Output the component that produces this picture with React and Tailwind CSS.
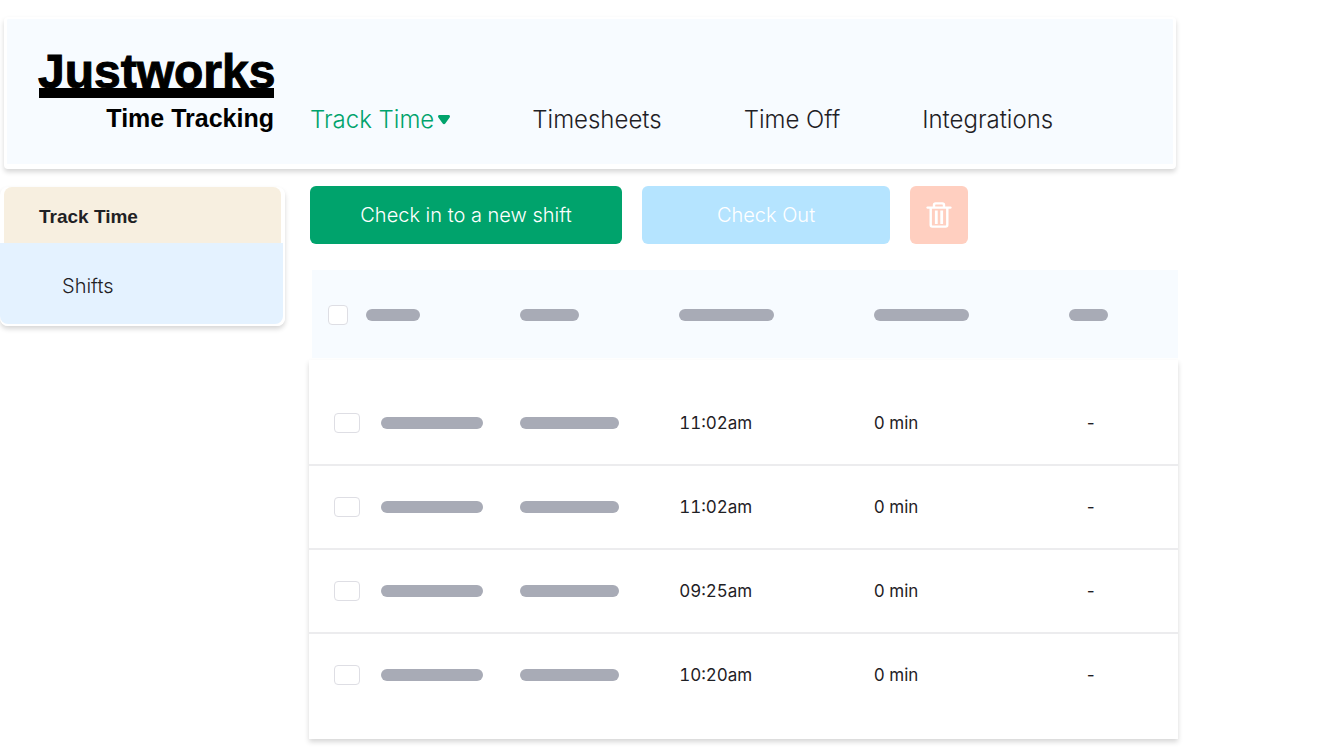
const shifts = [
  { id: 1, start: "11:02am", duration: "0 min", note: "-" },
  { id: 2, start: "11:02am", duration: "0 min", note: "-" },
  { id: 3, start: "09:25am", duration: "0 min", note: "-" },
  { id: 4, start: "10:20am", duration: "0 min", note: "-" },
];

function Logo() {
  return (
    <a href="#" className="flex w-[238px] shrink-0 flex-col font-['Liberation_Sans',sans-serif] font-bold text-black">
      <span className="h-9 text-5xl leading-10 whitespace-nowrap [-webkit-text-stroke:1px_black]">
        Justworks
      </span>
      <span className="mr-0.5 ml-px h-2.5 bg-black" />
      <span className="mt-1 mr-0.5 text-right text-[25px] leading-8 whitespace-nowrap">
        Time Tracking
      </span>
    </a>
  );
}

function Caret() {
  return (
    <svg viewBox="0 0 12 10" className="h-2.5 w-3" aria-hidden="true">
      <path
        d="M1.5 0h9c1.3 0 1.9 1.4 1.1 2.4L7.3 8.6c-.7.9-1.9.9-2.6 0L.4 2.4C-.4 1.4.2 0 1.5 0z"
        fill="currentColor"
      />
    </svg>
  );
}

function TrashIcon() {
  return (
    <svg viewBox="0 0 26 28" className="h-7 w-[26px]" fill="none" stroke="currentColor" strokeWidth="2.4" aria-hidden="true">
      <path d="M1.6 6.6h22.800" strokeLinecap="round" />
      <path d="M8 6V4c0-1 .6-1.600 1.600-1.600h6.800c1 0 1.600.6 1.600 1.600V6" />
      <path d="M4.700 7v17c0 1 .6 1.600 1.600 1.600h13.400c1 0 1.600-.6 1.600-1.600V7" />
      <path d="M10.300 9.500v13.500M15.700 9.500v13.500" strokeWidth="2.800" />
    </svg>
  );
}

function Bar({ className }) {
  return <span className={`block h-3 rounded-full bg-[#a8abb6] ${className}`} />;
}

function Checkbox({ label, className }) {
  return (
    <input
      type="checkbox"
      aria-label={label}
      className={`block h-5 appearance-none rounded border border-[#dedee4] bg-white checked:bg-[#00a36c] ${className}`}
    />
  );
}

export default function App() {
  return (
    <div className="w-[87.9%] bg-white pt-[17px] pb-4 font-['Inter','Liberation_Sans',sans-serif] text-[#1f2125]">
      <header className="mr-0.5 ml-1 flex items-start rounded border-x-[3px] border-t-2 border-b-[5px] border-white bg-[#f7fbff] pt-[33px] pb-7 pl-[31px] shadow-[0_3px_5px_rgba(0,0,0,0.16)]">
        <Logo />
        <nav className="mt-[52px] ml-[34px] flex items-center gap-[82px] text-2xl leading-8 font-light whitespace-nowrap">
          <button type="button" className="flex items-center gap-1 text-[#00a36c]">
            Track Time
            <Caret />
          </button>
          <a href="#timesheets">Timesheets</a>
          <a href="#time-off">Time Off</a>
          <a href="#integrations">Integrations</a>
        </nav>
      </header>

      <div className="mt-[17px] flex items-start gap-6">
        <aside className="mt-px w-[285px] shrink-0 rounded-lg border-r-2 border-b-2 border-white shadow-[0_3px_5px_rgba(0,0,0,0.16)]">
          <h2 className="mr-0.5 ml-1 rounded-t-lg bg-[#f7efe0] pt-[18px] pb-3.5 pl-[35px] font-['Liberation_Sans',sans-serif] text-[19px] leading-6 font-bold">
            Track Time
          </h2>
          <a href="#shifts" className="block rounded-b-lg bg-[#e4f2ff] pt-[29px] pb-6 pl-[62px] text-xl leading-7 font-light">
            Shifts
          </a>
        </aside>

        <main className="min-w-0 flex-1">
          <div className="flex gap-5 pl-px text-xl font-light text-white">
            <button type="button" className="h-[58px] w-[312px] rounded-md bg-[#00a36c]">
              Check in to a new shift
            </button>
            <button type="button" className="h-[58px] w-[248px] rounded-md bg-[#b5e4ff]">
              Check Out
            </button>
            <button
              type="button"
              aria-label="Delete shift"
              className="flex size-[58px] items-center justify-center rounded-md bg-[#ffcfc0]"
            >
              <TrashIcon />
            </button>
          </div>

          <table className="mt-[26px] w-full table-fixed border-separate border-spacing-0 text-left">
            <colgroup>
              <col className="w-[6.6%]" />
              <col className="w-[17.7%]" />
              <col className="w-[18.3%]" />
              <col className="w-[22.4%]" />
              <col className="w-[22.5%]" />
              <col />
            </colgroup>
            <thead>
              <tr className="h-[90px] *:border-b-2 *:border-white *:bg-[#f7fbff] *:p-0 *:pt-0.5 *:align-middle">
                <th className="border-l-[3px]">
                  <Checkbox label="Select all shifts" className="ml-4 w-5" />
                </th>
                <th><Bar className="w-[54px]" /></th>
                <th><Bar className="w-[59px]" /></th>
                <th><Bar className="w-[95px]" /></th>
                <th><Bar className="w-[95px]" /></th>
                <th><Bar className="w-[39px]" /></th>
              </tr>
            </thead>
            <tbody className="text-[17px] leading-6 tabular-nums shadow-[0_3px_5px_rgba(0,0,0,0.16)]">
              {shifts.map((shift) => (
                <tr
                  key={shift.id}
                  className="*:border-b-2 *:border-[#ececee] *:px-0 *:py-[29px] *:align-middle first:*:pt-[51px] last:*:border-b-0 last:*:pb-[52px]"
                >
                  <td>
                    <Checkbox label={`Select shift ${shift.id}`} className="ml-[25px] w-[26px]" />
                  </td>
                  <td><Bar className="ml-[15px] w-[102px]" /></td>
                  <td><Bar className="w-[99px]" /></td>
                  <td>{shift.start}</td>
                  <td>{shift.duration}</td>
                  <td className="pl-4!">{shift.note}</td>
                </tr>
              ))}
            </tbody>
          </table>
        </main>
      </div>
    </div>
  );
}
